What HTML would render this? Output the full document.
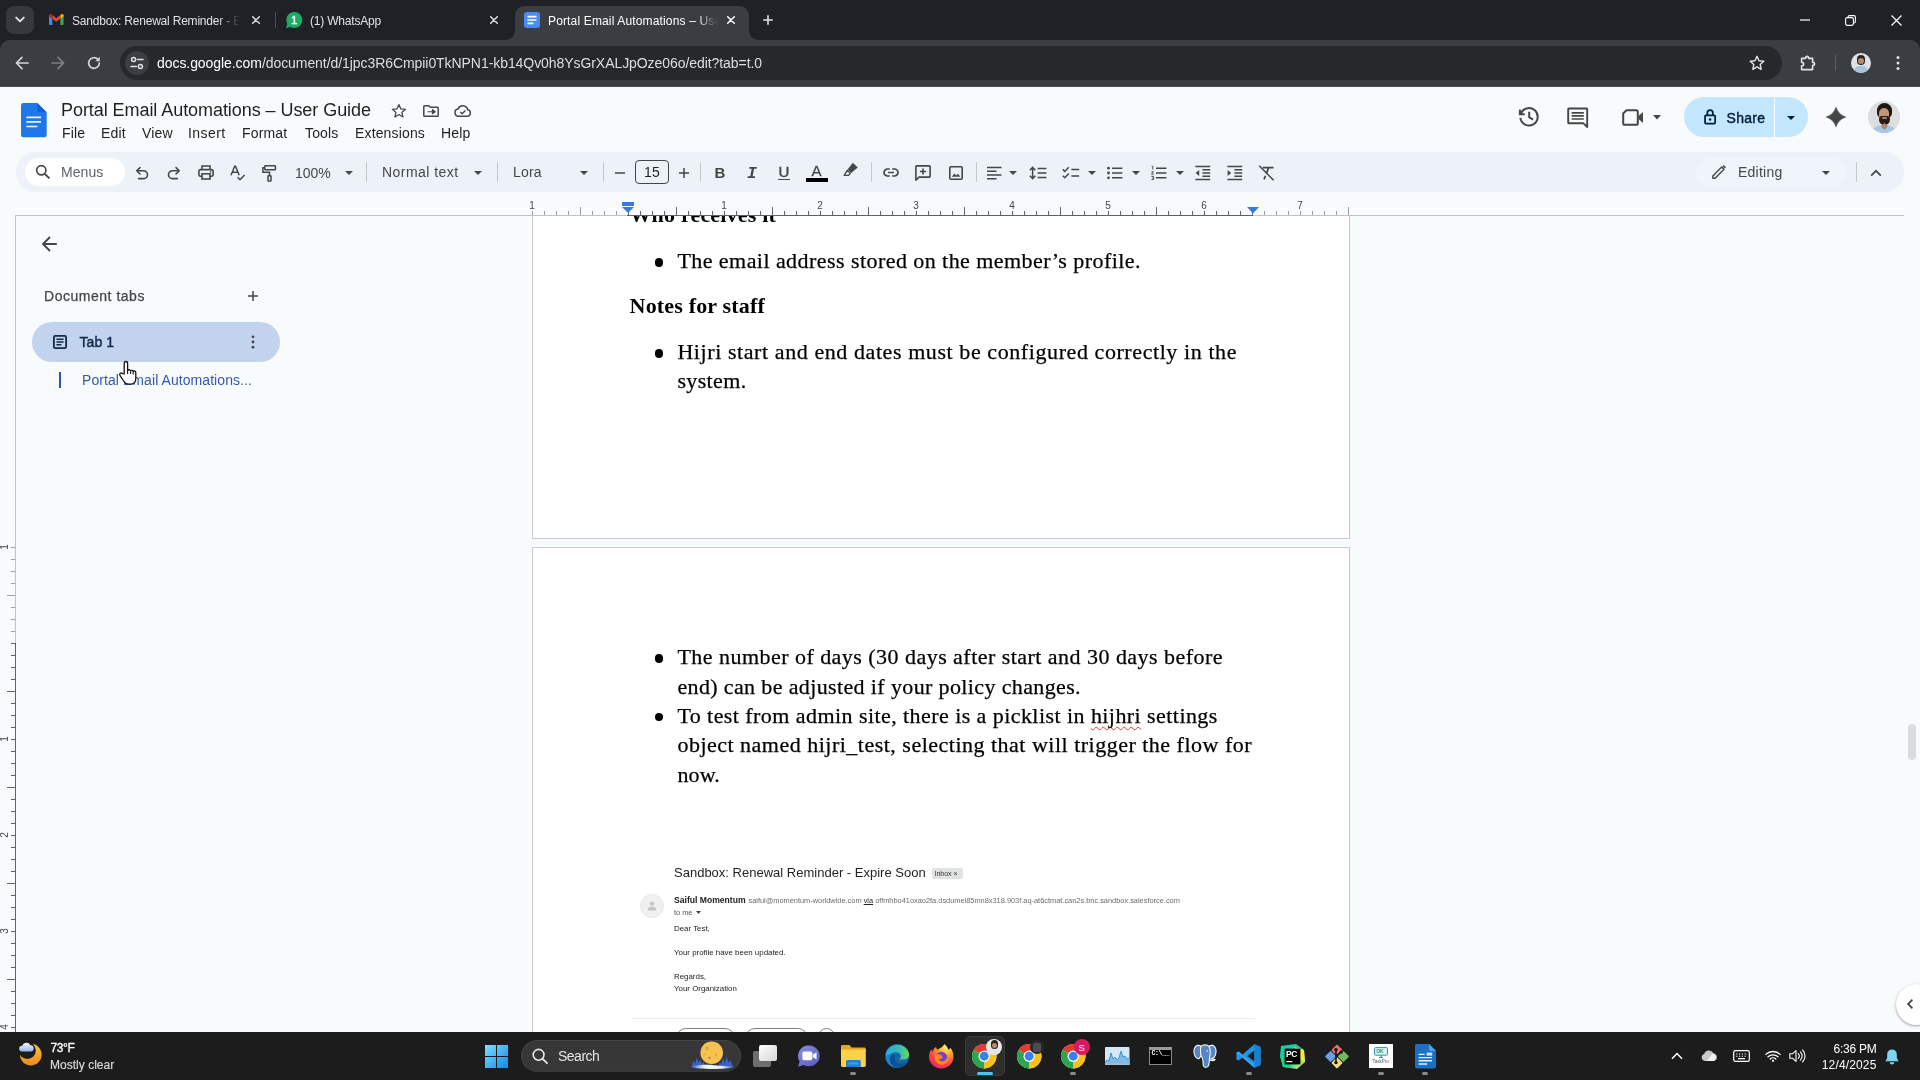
<!DOCTYPE html>
<html lang="en">
<head>
<meta charset="utf-8">
<title>Portal Email Automations – User Guide - Google Docs</title>
<style>
*{box-sizing:border-box;margin:0;padding:0}
html,body{width:1920px;height:1080px;overflow:hidden;background:#f8fbfc}
body{position:relative;font-family:"Liberation Sans",sans-serif;color:#1f1f1f}
.abs{position:absolute}
.t{position:absolute;white-space:nowrap;line-height:1}
svg{position:absolute;overflow:visible}
/* ---------- browser chrome ---------- */
#tabstrip{left:0;top:0;width:1920px;height:54px;background:#1e2125}
#navbar{left:0;top:40px;width:1920px;height:46px;background:#3a3d41;border-radius:10px 10px 0 0}
#navline{left:0;top:86px;width:1920px;height:1px;background:#4b4d51}
#omni{left:120px;top:46px;width:1662px;height:34px;border-radius:17px;background:#26282c}
.tabtxt{font-size:12px;color:#dfe1e5;letter-spacing:-0.2px}
/* ---------- docs ---------- */
.menu{font-size:14px;color:#1f1f1f;letter-spacing:.15px;top:126px}
.tb{font-size:14px;color:#444746}
.sep{position:absolute;width:1px;background:#c7c7c7;top:162px;height:20px}
.serif{font-family:"Liberation Serif",serif;font-size:22px;color:#000;-webkit-text-stroke:.25px #000;position:absolute;white-space:nowrap;line-height:1}
/* ---------- taskbar ---------- */
#taskbar{left:0;top:1032px;width:1920px;height:48px;background:#1c1c1d}
.tk{color:#fff;font-size:12px}
.sq{text-decoration:underline wavy #e03b30 1px;text-underline-offset:3px;text-decoration-skip-ink:none}
</style>
</head>
<body>
<div id="root" style="position:absolute;left:0;top:0;width:1920px;height:1080px;will-change:transform">

<!-- ================= BROWSER CHROME ================= -->
<div id="tabstrip" class="abs"></div>
<div id="navbar" class="abs"></div>
<div id="navline" class="abs"></div>

<!-- tab search dropdown -->
<div class="abs" style="left:6px;top:6px;width:28px;height:28px;border-radius:8px;background:#35383c"></div>
<svg style="left:14px;top:15px" width="12" height="10" viewBox="0 0 12 10"><path d="M2.2 2.6 6 6.4 9.8 2.6" fill="none" stroke="#e3e3e3" stroke-width="1.9" stroke-linecap="round" stroke-linejoin="round"/></svg>

<!-- tab 1 : gmail -->
<svg style="left:48.600px;top:14px" width="14.600" height="11" viewBox="0 0 16 12">
<path d="M0 1.6V11a1 1 0 0 0 1 1h2.6V5.2z" fill="#4285f4"/>
<path d="M16 1.6V11a1 1 0 0 1-1 1h-2.6V5.2z" fill="#34a853"/>
<path d="M12.4 1.2V5.2L16 2.5V1.6C16 .2 14.5-.4 13.4.4z" fill="#fbbc04"/>
<path d="M3.6 5.2V1.2L8 4.5l4.4-3.3v4L8 8.5z" fill="#ea4335"/>
<path d="M0 1.6v.9l3.6 2.7v-4L2.6.4C1.5-.4 0 .2 0 1.6z" fill="#c5221f"/>
</svg>
<div class="t tabtxt" style="left:72px;top:15px;width:170px;overflow:hidden;-webkit-mask-image:linear-gradient(90deg,#000 146px,transparent 168px);mask-image:linear-gradient(90deg,#000 146px,transparent 168px)">Sandbox: Renewal Reminder - Expire Soon</div>
<svg style="left:251px;top:15px" width="10" height="10" viewBox="0 0 10 10"><path d="M1.700 1.700 8.300 8.300M8.300 1.700 1.700 8.300" stroke="#dfe1e5" stroke-width="1.5" stroke-linecap="round"/></svg>
<div class="abs" style="left:275px;top:12px;width:1px;height:16px;background:#4a4d51"></div>

<!-- tab 2 : whatsapp -->
<svg style="left:285px;top:11px" width="18" height="18" viewBox="0 0 18 18"><circle cx="9.300" cy="9" r="8" fill="#1dab61"/><path d="M1 17.200 2.600 12 6.600 15.600Z" fill="#1dab61"/></svg>
<div class="t" style="left:291px;top:14.500px;font-size:11.500px;color:#fff;-webkit-text-stroke:.4px #fff">1</div>
<div class="t tabtxt" style="left:310px;top:15px">(1) WhatsApp</div>
<svg style="left:489px;top:15px" width="10" height="10" viewBox="0 0 10 10"><path d="M1.700 1.700 8.300 8.300M8.300 1.700 1.700 8.300" stroke="#dfe1e5" stroke-width="1.5" stroke-linecap="round"/></svg>

<!-- tab 3 : active docs tab -->
<svg style="left:505px;top:6px" width="254" height="34" viewBox="0 0 254 34"><path d="M0 34C6 34 10 30 10 24V10C10 4 14 0 20 0H234C240 0 244 4 244 10V24C244 30 248 34 254 34Z" fill="#3a3d41"/></svg>
<svg style="left:524px;top:12px" width="16" height="16" viewBox="0 0 16 16"><rect x="0" y="0" width="16" height="16" rx="3" fill="#4a8af4"/><path d="M3.5 4.6h9M3.5 8h9M3.5 11.4h6" stroke="#fff" stroke-width="1.6"/></svg>
<div class="t tabtxt" style="left:548px;top:15px;width:172px;overflow:hidden;color:#fff;letter-spacing:.15px;-webkit-mask-image:linear-gradient(90deg,#000 148px,transparent 170px);mask-image:linear-gradient(90deg,#000 148px,transparent 170px)">Portal Email Automations – User Guide</div>
<svg style="left:726px;top:15px" width="10" height="10" viewBox="0 0 10 10"><path d="M1.700 1.700 8.300 8.300M8.300 1.700 1.700 8.300" stroke="#fff" stroke-width="1.5" stroke-linecap="round"/></svg>
<svg style="left:762px;top:14px" width="12" height="12" viewBox="0 0 12 12"><path d="M6 1.250V10.750M1.250 6H10.750" stroke="#e3e3e3" stroke-width="1.600"/></svg>

<!-- window controls -->
<svg style="left:1800px;top:19px" width="10" height="2" viewBox="0 0 10 2"><path d="M0 1h10" stroke="#fff" stroke-width="1.2"/></svg>
<svg style="left:1845px;top:15px" width="11" height="11" viewBox="0 0 11 11"><rect x=".6" y="2.6" width="7.8" height="7.8" rx="1.6" fill="none" stroke="#fff" stroke-width="1.1"/><path d="M3 2.4V2A1.5 1.5 0 0 1 4.5.6H9A1.5 1.5 0 0 1 10.4 2v4.5A1.5 1.5 0 0 1 9 8h-.4" fill="none" stroke="#fff" stroke-width="1.1"/></svg>
<svg style="left:1891px;top:15px" width="11" height="11" viewBox="0 0 11 11"><path d="M.5.5l10 10M10.500 .5l-10 10" stroke="#fff" stroke-width="1.2"/></svg>

<!-- nav buttons -->
<svg style="left:15px;top:56px" width="14" height="14" viewBox="0 0 14 14"><path d="M13 7H1.6M7 1.4 1.4 7 7 12.600" fill="none" stroke="#d5d7da" stroke-width="1.7" stroke-linecap="round" stroke-linejoin="round"/></svg>
<svg style="left:51px;top:56px" width="14" height="14" viewBox="0 0 14 14"><path d="M1 7h11.4M7 1.400 12.600 7 7 12.600" fill="none" stroke="#7d8084" stroke-width="1.700" stroke-linecap="round" stroke-linejoin="round"/></svg>
<svg style="left:87px;top:56px" width="14" height="14" viewBox="0 0 14 14"><path d="M12.300 7A5.300 5.300 0 1 1 10.700 3.200" fill="none" stroke="#d5d7da" stroke-width="1.700" stroke-linecap="round"/><path d="M12.800 .8v4.400H8.400z" fill="#d5d7da"/></svg>

<!-- omnibox -->
<div id="omni" class="abs"></div>
<div class="abs" style="left:125px;top:51px;width:24px;height:24px;border-radius:12px;background:#3b3e42"></div>
<svg style="left:130px;top:56px" width="14" height="14" viewBox="0 0 14 14"><circle cx="3.600" cy="3.600" r="2" fill="none" stroke="#e3e3e3" stroke-width="1.500"/><path d="M7.600 3.600H13" stroke="#e3e3e3" stroke-width="1.500" stroke-linecap="round"/><circle cx="10.400" cy="10.400" r="2" fill="none" stroke="#e3e3e3" stroke-width="1.500"/><path d="M1 10.400H6.400" stroke="#e3e3e3" stroke-width="1.500" stroke-linecap="round"/></svg>
<div class="t" style="left:157px;top:56px;font-size:14px;color:#fff;letter-spacing:-.065px">docs.google.com<span style="color:#dcdee1">/document/d/1jpc3R6Cmpii0TkNPN1-kb14Qv0h8YsGrXALJpOze06o/edit?tab=t.0</span></div>
<svg style="left:1749px;top:55px" width="16" height="16" viewBox="0 0 16 16"><path d="M8 1.300 10 5.800 14.800 6.300 11.200 9.500 12.200 14.300 8 11.800 3.800 14.300 4.800 9.500 1.200 6.300 6 5.800Z" fill="none" stroke="#e3e3e3" stroke-width="1.400" stroke-linejoin="round"/></svg>
<svg style="left:1799px;top:54px" width="18" height="18" viewBox="0 0 18 18"><path d="M2.600 4.400H6.600V3.900A1.500 1.500 0 0 1 9.600 3.900V4.400H13.600V8.400H14.100A1.500 1.500 0 0 1 14.100 11.400H13.600V15.600H2.600V11.800H3A1.700 1.700 0 0 0 3 8.400H2.600Z" fill="none" stroke="#e3e3e3" stroke-width="1.600" stroke-linejoin="round"/></svg>
<div class="abs" style="left:1835px;top:55px;width:1px;height:16px;background:#5a5d61"></div>
<div class="abs" style="left:1851px;top:53px;width:20px;height:20px;border-radius:10px;background:#dfe3e6;overflow:hidden">
  <div class="abs" style="left:6px;top:2px;width:8px;height:10px;border-radius:4px;background:#2b2321"></div>
  <div class="abs" style="left:7px;top:5px;width:6px;height:6px;border-radius:3px;background:#b98a6c"></div>
  <div class="abs" style="left:3px;top:13px;width:14px;height:10px;border-radius:5px;background:#a9c4dc"></div>
</div>
<svg style="left:1896px;top:55px" width="4" height="16" viewBox="0 0 4 16"><circle cx="2" cy="2.500" r="1.500" fill="#e3e3e3"/><circle cx="2" cy="8" r="1.500" fill="#e3e3e3"/><circle cx="2" cy="13.500" r="1.500" fill="#e3e3e3"/></svg>

<!-- ================= DOCS HEADER ================= -->

<!-- docs logo -->
<svg style="left:21.200px;top:103px" width="25.700" height="34.300" viewBox="0 0 25.700 34.300"><path d="M2.400 0H16.400L25.700 9.300V31.900A2.400 2.400 0 0 1 23.300 34.300H2.400A2.400 2.400 0 0 1 0 31.900V2.400A2.400 2.400 0 0 1 2.400 0Z" fill="#1f78ea"/><path d="M16.400 0 25.700 9.300H18.800A2.400 2.400 0 0 1 16.400 6.900Z" fill="#0b55cf" opacity=".7"/><path d="M5.400 14.300H20M5.400 18.900H20M5.400 23.500H16.300" stroke="#eef4ff" stroke-width="1.700"/></svg>
<div class="t" style="left:61px;top:101px;font-size:18px;color:#1f1f1f;letter-spacing:-.06px">Portal Email Automations – User Guide</div>
<!-- star -->
<svg style="left:391px;top:103px" width="15.800" height="15.800" viewBox="0 0 17 17"><path d="M8.500 1.700 10.500 6.300 15.500 6.800 11.700 10.100 12.800 15 8.500 12.400 4.200 15 5.300 10.100 1.500 6.800 6.500 6.300Z" fill="none" stroke="#444746" stroke-width="1.400" stroke-linejoin="round"/></svg>
<!-- move to folder -->
<svg style="left:423px;top:104.800px" width="16" height="12" viewBox="0 0 16 12"><path d="M1.600 .8H5.800L7.300 2.300H14.400A.8 .8 0 0 1 15.200 3.100V10.400A.8 .8 0 0 1 14.400 11.200H1.600A.8 .8 0 0 1 .8 10.400V1.600A.8 .8 0 0 1 1.600 .8Z" fill="none" stroke="#444746" stroke-width="1.500" stroke-linejoin="round"/><path d="M4.600 6.700H9.400V4.500L12.200 6.700 9.400 8.900V6.700" fill="#444746" stroke="#444746" stroke-width="1.100" stroke-linejoin="round"/></svg>
<!-- cloud done -->
<svg style="left:454px;top:104.800px" width="18" height="12" viewBox="0 0 18 12"><path d="M4.600 11.200A3.600 3.600 0 0 1 4 4.050 5.100 5.100 0 0 1 13.700 4.700 3.300 3.300 0 0 1 13.600 11.200Z" fill="none" stroke="#444746" stroke-width="1.500" stroke-linejoin="round"/><path d="M6.400 7.100 8.100 8.800 11.500 5.400" fill="none" stroke="#444746" stroke-width="1.400"/></svg>
<!-- menus -->
<div class="t menu" style="left:62px">File</div>
<div class="t menu" style="left:101px">Edit</div>
<div class="t menu" style="left:142px">View</div>
<div class="t menu" style="left:188px;letter-spacing:.45px">Insert</div>
<div class="t menu" style="left:242px">Format</div>
<div class="t menu" style="left:305px">Tools</div>
<div class="t menu" style="left:355px">Extensions</div>
<div class="t menu" style="left:441px">Help</div>

<!-- right header icons -->
<!-- history -->
<svg style="left:1517px;top:105px" width="24" height="24" viewBox="0 0 24 24"><path d="M3.700 9.200A8.700 8.700 0 1 1 3.360 12.900" fill="none" stroke="#444746" stroke-width="2"/><path d="M2.900 4.400V9.300H7.700" fill="none" stroke="#444746" stroke-width="2"/><path d="M12.200 6.800V12.200L16 14.600" fill="none" stroke="#444746" stroke-width="2"/></svg>
<!-- comments -->
<svg style="left:1567px;top:107px" width="22" height="22" viewBox="0 0 22 22"><path d="M2 1.500H19.400A.8 .8 0 0 1 20.200 2.300V20L16.500 16.300H2A.8 .8 0 0 1 1.200 15.500V2.300A.8 .8 0 0 1 2 1.500Z" fill="none" stroke="#444746" stroke-width="1.900" stroke-linejoin="round"/><path d="M4.600 5.800H16.800M4.600 8.900H16.800M4.600 12H16.800" stroke="#444746" stroke-width="1.700"/></svg>
<!-- video -->
<svg style="left:1622px;top:109px" width="22" height="17" viewBox="0 0 22 17"><path d="M4.500 1.200H14.200A1.600 1.600 0 0 1 15.800 2.800V14.200A1.600 1.600 0 0 1 14.200 15.800H2.800A1.600 1.600 0 0 1 1.200 14.200V4.500Z" fill="none" stroke="#444746" stroke-width="2" stroke-linejoin="round"/><path d="M16.500 7 21 3V14L16.500 10Z" fill="#444746"/></svg>
<svg style="left:1653px;top:115px" width="8" height="4.500" viewBox="0 0 8 4.500"><path d="M0 0H8L4 4.500Z" fill="#444746"/></svg>
<!-- share -->
<div class="abs" style="left:1684px;top:97px;width:124px;height:40px;border-radius:20px;background:#c2e7ff"></div>
<div class="abs" style="left:1774px;top:97px;width:1px;height:40px;background:#f8fbfc"></div>
<svg style="left:1704px;top:108.800px" width="12.200" height="15.700" viewBox="0 0 14 18"><rect x="1.200" y="7.200" width="11.600" height="9.600" rx="1.200" fill="none" stroke="#001d35" stroke-width="2"/><path d="M3.800 7V4.600A3.200 3.200 0 0 1 10.200 4.600V7" fill="none" stroke="#001d35" stroke-width="2"/><circle cx="7" cy="12" r="1.400" fill="#001d35"/></svg>
<div class="t" style="left:1726.500px;top:111px;font-size:14px;color:#001d35;-webkit-text-stroke:.4px #001d35;letter-spacing:.3px">Share</div>
<svg style="left:1787px;top:116px" width="8" height="4" viewBox="0 0 8 4"><path d="M0 0H8L4 4Z" fill="#001d35"/></svg>
<!-- gemini spark -->
<svg style="left:1826px;top:107px" width="20" height="20" viewBox="0 0 20 20"><path d="M10 .4C11.400 5 15 8.600 19.600 10 15 11.400 11.400 15 10 19.600 8.600 15 5 11.400 .4 10 5 8.600 8.600 5 10 .4Z" fill="#444746" stroke="#444746" stroke-width=".8" stroke-linejoin="round"/></svg>
<!-- avatar -->
<div class="abs" style="left:1868px;top:101.200px;width:32px;height:32px;border-radius:16px;background:#dedede;overflow:hidden">
  <div class="abs" style="left:8.500px;top:1.500px;width:15px;height:15px;border-radius:7.500px 7.500px 5px 5px;background:#1d1614"></div>
  <div class="abs" style="left:11px;top:7px;width:10px;height:13px;border-radius:5px;background:#bf9678"></div>
  <div class="abs" style="left:10.500px;top:15px;width:11px;height:9px;border-radius:3px 3px 5.500px 5.500px;background:#2a1d18"></div>
  <div class="abs" style="left:13.500px;top:16px;width:5px;height:2px;border-radius:1px;background:#a87c62"></div>
  <div class="abs" style="left:2px;top:24px;width:28px;height:16px;border-radius:12px 12px 0 0;background:#a5c9ea"></div>
  <div class="abs" style="left:13.500px;top:22.500px;width:5px;height:5px;transform:rotate(45deg);background:#b48a6e"></div>
</div>

<!-- ================= DOCS TOOLBAR ================= -->

<div class="abs" style="left:16px;top:152px;width:1888px;height:40px;border-radius:20px;background:#edf2f8"></div>
<div class="abs" style="left:25px;top:158px;width:100px;height:28px;border-radius:14px;background:#fff"></div>
<svg style="left:35px;top:164px" width="16" height="16" viewBox="0 0 16 16"><circle cx="6.300" cy="6.300" r="4.600" fill="none" stroke="#444746" stroke-width="1.700"/><path d="M9.800 9.800 14.400 14.400" stroke="#444746" stroke-width="1.900"/></svg>
<div class="t tb" style="left:61px;top:165px;color:#5f6368;letter-spacing:.05px">Menus</div>
<!-- undo -->
<svg style="left:135px;top:166px" width="14" height="14" viewBox="0 0 14 14"><path d="M5 1.600 1.800 4.800 5 8" fill="none" stroke="#444746" stroke-width="1.600" stroke-linejoin="round" stroke-linecap="round"/><path d="M2.200 4.800H8.600A3.900 3.900 0 0 1 8.600 12.600H3.600" fill="none" stroke="#444746" stroke-width="1.600" stroke-linecap="round"/></svg>
<!-- redo -->
<svg style="left:167px;top:166px" width="14" height="14" viewBox="0 0 14 14"><path d="M9 1.600 12.200 4.800 9 8" fill="none" stroke="#444746" stroke-width="1.600" stroke-linejoin="round" stroke-linecap="round"/><path d="M11.800 4.800H5.400A3.900 3.900 0 0 0 5.400 12.600H10.400" fill="none" stroke="#444746" stroke-width="1.600" stroke-linecap="round"/></svg>
<!-- print -->
<svg style="left:198px;top:165px" width="16" height="15" viewBox="0 0 16 15"><path d="M4 4.600V1H12V4.600" fill="none" stroke="#444746" stroke-width="1.600"/><path d="M4 11.200H2.400A1.500 1.500 0 0 1 .9 9.700V6.300A1.700 1.700 0 0 1 2.600 4.600H13.400A1.700 1.700 0 0 1 15.100 6.300V9.700A1.500 1.500 0 0 1 13.600 11.200H12" fill="none" stroke="#444746" stroke-width="1.600"/><rect x="4" y="8.800" width="8" height="5.200" fill="none" stroke="#444746" stroke-width="1.600"/><circle cx="12.600" cy="6.900" r=".8" fill="#444746"/></svg>
<!-- spellcheck -->
<svg style="left:230px;top:165px" width="16" height="16" viewBox="0 0 16 16"><path d="M1 10.300 4.700 1.200H5.500L9.200 10.300M2.400 7.200H7.800" fill="none" stroke="#444746" stroke-width="1.500"/><path d="M7.600 12.300 10 14.700 14.600 10" fill="none" stroke="#444746" stroke-width="1.500"/></svg>
<!-- paint format -->
<svg style="left:262px;top:165px" width="15" height="17" viewBox="0 0 15 17"><rect x="2.800" y=".8" width="10.600" height="4" rx=".6" fill="none" stroke="#444746" stroke-width="1.500"/><path d="M2.800 2.800H.9V7.300H7.500V10.400" fill="none" stroke="#444746" stroke-width="1.500"/><rect x="6" y="10.800" width="3" height="5.200" rx=".5" fill="none" stroke="#444746" stroke-width="1.500"/></svg>
<div class="t tb" style="left:295px;top:166px">100%</div>
<svg style="left:345px;top:171px" width="8" height="4" viewBox="0 0 8 4"><path d="M0 0H8L4 4Z" fill="#444746"/></svg>
<div class="sep" style="left:366px"></div>
<div class="t tb" style="left:382px;top:165px;letter-spacing:.46px">Normal text</div>
<svg style="left:474px;top:171px" width="8" height="4" viewBox="0 0 8 4"><path d="M0 0H8L4 4Z" fill="#444746"/></svg>
<div class="sep" style="left:497px"></div>
<div class="t tb" style="left:513px;top:165px;letter-spacing:.2px">Lora</div>
<svg style="left:580px;top:171px" width="8" height="4" viewBox="0 0 8 4"><path d="M0 0H8L4 4Z" fill="#444746"/></svg>
<div class="sep" style="left:603px"></div>
<svg style="left:615px;top:171.500px" width="10" height="2" viewBox="0 0 10 2"><path d="M0 1H10" stroke="#444746" stroke-width="1.500"/></svg>
<div class="abs" style="left:635px;top:160px;width:34px;height:24px;border-radius:4px;border:1px solid #444746"></div>
<div class="t tb" style="left:644px;top:165px;color:#1f1f1f;letter-spacing:.3px">15</div>
<svg style="left:679px;top:167.500px" width="10" height="10" viewBox="0 0 10 10"><path d="M0 5H10M5 0V10" stroke="#444746" stroke-width="1.500"/></svg>
<div class="sep" style="left:700px"></div>
<!-- B I U A -->
<div class="t" style="left:714.500px;top:165px;font-size:15px;font-weight:bold;color:#444746">B</div>
<div class="t" style="left:747px;top:165.500px;font-size:16.500px;font-style:italic;font-weight:bold;color:#444746;font-family:'Liberation Mono',monospace">I</div>
<div class="t" style="left:778.500px;top:164px;font-size:15px;color:#444746;-webkit-text-stroke:.4px #444746">U</div>
<div class="abs" style="left:778px;top:178.500px;width:12px;height:1.500px;background:#444746"></div>
<div class="t" style="left:811.500px;top:163px;font-size:15px;color:#444746;-webkit-text-stroke:.3px #444746">A</div>
<div class="abs" style="left:806px;top:178px;width:22px;height:4px;background:#000"></div>
<!-- highlighter -->
<svg style="left:843px;top:162px" width="16" height="15" viewBox="0 0 16 15"><path d="M9.800 .8 14.800 5.400 8.200 11 4.600 7.600Z" fill="#444746"/><path d="M4.200 8.300 7.400 11.400 5.200 13.400H1.200Z" fill="none" stroke="#444746" stroke-width="1.300" stroke-linejoin="round"/></svg>
<div class="sep" style="left:871px"></div>
<!-- link -->
<svg style="left:883px;top:168px" width="16" height="9" viewBox="0 0 16 9"><path d="M6.800 1H4.500A3.500 3.500 0 0 0 4.500 8H6.800M9.200 1H11.500A3.500 3.500 0 0 1 11.500 8H9.200M5 4.500H11" fill="none" stroke="#444746" stroke-width="1.700"/></svg>
<!-- add comment -->
<svg style="left:915px;top:165px" width="16" height="16" viewBox="0 0 16 16"><path d="M1.600 .9H14.400A.7 .7 0 0 1 15.100 1.600V11.400A.7 .7 0 0 1 14.400 12.100H4L.9 15.200V1.600A.7 .7 0 0 1 1.600 .9Z" fill="none" stroke="#444746" stroke-width="1.600" stroke-linejoin="round"/><path d="M8 3.400V9.600M4.900 6.500H11.100" stroke="#444746" stroke-width="1.600"/></svg>
<!-- image -->
<svg style="left:949px;top:166px" width="14" height="14" viewBox="0 0 14 14"><rect x=".8" y=".8" width="12.400" height="12.400" rx="1" fill="none" stroke="#444746" stroke-width="1.600"/><path d="M2.800 10.800 5.400 7.400 7.200 9.600 9 7.800 11.300 10.800Z" fill="#444746"/></svg>
<div class="sep" style="left:976px"></div>
<!-- align -->
<svg style="left:987px;top:166px" width="15" height="14" viewBox="0 0 15 14"><path d="M0 1.400H14.500M0 5.200H9.500M0 9H14.500M0 12.800H9.500" stroke="#444746" stroke-width="1.500"/></svg>
<svg style="left:1008.5px;top:171px" width="8" height="4" viewBox="0 0 8 4"><path d="M0 0H8L4 4Z" fill="#444746"/></svg>
<!-- line spacing -->
<svg style="left:1029px;top:166px" width="18" height="14" viewBox="0 0 18 14"><path d="M3.600 1.600V12.400M.8 4.200 3.600 1.400 6.400 4.200M.8 9.800 3.600 12.600 6.400 9.800" fill="none" stroke="#444746" stroke-width="1.500"/><path d="M8.600 2.400H17.400M8.600 7H17.400M8.600 11.600H17.400" stroke="#444746" stroke-width="1.500"/></svg>
<!-- checklist -->
<svg style="left:1062px;top:166px" width="18" height="14" viewBox="0 0 18 14"><path d="M.8 3.400 2.800 5.400 6.800 1.200M.8 9.800 2.800 11.800 6.800 7.600" fill="none" stroke="#444746" stroke-width="1.500"/><path d="M9.400 3.400H17.200M9.400 10H17.200" stroke="#444746" stroke-width="1.500"/></svg>
<svg style="left:1088px;top:171px" width="8" height="4" viewBox="0 0 8 4"><path d="M0 0H8L4 4Z" fill="#444746"/></svg>
<!-- bullets -->
<svg style="left:1107px;top:166px" width="16" height="14" viewBox="0 0 16 14"><circle cx="1.500" cy="2.200" r="1.400" fill="#444746"/><circle cx="1.500" cy="7" r="1.400" fill="#444746"/><circle cx="1.500" cy="11.800" r="1.400" fill="#444746"/><path d="M5 2.200H15.400M5 7H15.400M5 11.800H15.400" stroke="#444746" stroke-width="1.500"/></svg>
<svg style="left:1132px;top:171px" width="8" height="4" viewBox="0 0 8 4"><path d="M0 0H8L4 4Z" fill="#444746"/></svg>
<!-- numbered -->
<svg style="left:1151px;top:165px" width="16" height="16" viewBox="0 0 16 16"><path d="M5 3.200H15.400M5 8H15.400M5 12.800H15.400" stroke="#444746" stroke-width="1.500"/><path d="M.6 1.200H1.800V4.600M.4 6.800H2.600L.4 9.200H2.800M.4 11.400H2.600V14.600H.4M1.200 13H2.600" fill="none" stroke="#444746" stroke-width=".9"/></svg>
<svg style="left:1176px;top:171px" width="8" height="4" viewBox="0 0 8 4"><path d="M0 0H8L4 4Z" fill="#444746"/></svg>
<!-- outdent -->
<svg style="left:1195px;top:165px" width="16" height="16" viewBox="0 0 16 16"><path d="M.4 1.400H15.200M.4 14.600H15.200" stroke="#444746" stroke-width="1.500"/><path d="M7.400 4.700H15.200M7.400 8H15.200M7.400 11.300H15.200" stroke="#444746" stroke-width="1.400"/><path d="M4.200 5 .6 8 4.200 11Z" fill="#444746"/></svg>
<!-- indent -->
<svg style="left:1227px;top:165px" width="16" height="16" viewBox="0 0 16 16"><path d="M.4 1.400H15.200M.4 14.600H15.200" stroke="#444746" stroke-width="1.500"/><path d="M7.400 4.700H15.200M7.400 8H15.200M7.400 11.300H15.200" stroke="#444746" stroke-width="1.400"/><path d="M.6 5 4.200 8 .6 11Z" fill="#444746"/></svg>
<!-- clear formatting -->
<svg style="left:1258px;top:165px" width="17" height="16" viewBox="0 0 17 16"><path d="M4.600 2.600H15.600M10.600 2.600 8.400 8.600M7.400 10.800 6 14.400" fill="none" stroke="#444746" stroke-width="1.700"/><path d="M1.200 .8 15.600 15.200" stroke="#444746" stroke-width="1.500"/></svg>

<!-- editing mode -->
<div class="abs" style="left:1696px;top:158px;width:151px;height:29px;border-radius:14.500px;background:#f0f4fb"></div>
<svg style="left:1711px;top:164px" width="16" height="16" viewBox="0 0 16 16"><path d="M1.800 14.200V11.900L10.700 3 13 5.300 4.100 14.200Z" fill="none" stroke="#444746" stroke-width="1.400" stroke-linejoin="round"/><path d="M11.500 2.200 12.700 1 15 3.300 13.800 4.500Z" fill="#444746"/></svg>
<div class="t tb" style="left:1738px;top:165px;letter-spacing:.25px">Editing</div>
<svg style="left:1822px;top:171px" width="8" height="4" viewBox="0 0 8 4"><path d="M0 0H8L4 4Z" fill="#444746"/></svg>
<div class="sep" style="left:1856px"></div>
<svg style="left:1870px;top:169px" width="12" height="8" viewBox="0 0 12 8"><path d="M1.200 6.600 6 1.800 10.800 6.600" fill="none" stroke="#444746" stroke-width="1.700"/></svg>


<!-- ================= SIDEBAR ================= -->

<!-- back arrow -->
<svg style="left:41px;top:236px" width="16" height="16" viewBox="0 0 16 16"><path d="M15.800 8H2M9 1 2 8 9 15" fill="none" stroke="#444746" stroke-width="1.900"/></svg>
<div class="t" style="left:44px;top:289px;font-size:14px;color:#444746;letter-spacing:.52px;-webkit-text-stroke:.25px #444746">Document tabs</div>
<svg style="left:248px;top:291px" width="10" height="10" viewBox="0 0 10 10"><path d="M5 0V10M0 5H10" stroke="#444746" stroke-width="1.500"/></svg>
<div class="abs" style="left:32px;top:322px;width:248px;height:40px;border-radius:20px;background:#c2d3ed"></div>
<svg style="left:53px;top:335px" width="14" height="14" viewBox="0 0 14 14"><rect x=".9" y=".9" width="12.200" height="12.200" rx="1.400" fill="none" stroke="#14284a" stroke-width="1.800"/><path d="M3.400 4.300H10.600M3.400 7H10.600M3.400 9.700H8.400" stroke="#14284a" stroke-width="1.600"/></svg>
<div class="t" style="left:79.500px;top:335px;font-size:14px;color:#14284a;-webkit-text-stroke:.45px #14284a;letter-spacing:.1px">Tab 1</div>
<svg style="left:251px;top:335px" width="4" height="14" viewBox="0 0 4 14"><circle cx="2" cy="1.800" r="1.400" fill="#444746"/><circle cx="2" cy="7" r="1.400" fill="#444746"/><circle cx="2" cy="12.200" r="1.400" fill="#444746"/></svg>
<div class="abs" style="left:59px;top:372px;width:2px;height:16px;background:#2d53b3"></div>
<div class="t" style="left:82px;top:373px;font-size:14px;color:#3558b0;letter-spacing:.07px">Portal Email Automations...</div>
<!-- hand cursor -->
<svg style="left:117px;top:360px" width="22" height="26" viewBox="0 0 22 26"><path d="M7.200 13.800V3.200A1.700 1.700 0 0 1 10.600 3.200V10.600L11 10.200A1.600 1.600 0 0 1 13.600 10.800 1.600 1.600 0 0 1 16.200 11.400 1.600 1.600 0 0 1 18.800 12.600V18.600C18.800 22 16.800 24.200 13.400 24.200H11.800C9.400 24.200 8 23.200 6.600 21L3 15.400A1.500 1.500 0 0 1 5.400 13.600Z" fill="#fff" stroke="#111" stroke-width="1.300" stroke-linejoin="round"/><path d="M10.600 10.600V14M13.600 11.400V14M16.200 12V14.400" stroke="#111" stroke-width="1.100"/></svg>


<!-- ================= DOCUMENT ================= -->

<!-- pages -->
<div class="abs" style="left:532px;top:200px;width:818px;height:339px;background:#fff;border:1px solid #c9cbce;border-top:none"></div>
<div class="abs" style="left:532px;top:547px;width:818px;height:500px;background:#fff;border:1px solid #c9cbce"></div>
<!-- page 1 & 2 text -->
<div class="serif" style="left:629.4px;top:204px;letter-spacing:0.188px;font-weight:bold;-webkit-text-stroke:0">Who receives it</div>
<div class="serif" style="left:677.4px;top:250px;letter-spacing:0.443px">The email address stored on the member’s profile.</div>
<div class="serif" style="left:629.6px;top:295px;letter-spacing:0.175px;font-weight:bold;-webkit-text-stroke:0">Notes for staff</div>
<div class="serif" style="left:677.4px;top:341px;letter-spacing:0.581px">Hijri start and end dates must be configured correctly in the</div>
<div class="serif" style="left:677.4px;top:370px;letter-spacing:0.368px">system.</div>
<div class="serif" style="left:677.4px;top:646px;letter-spacing:0.465px">The number of days (30 days after start and 30 days before</div>
<div class="serif" style="left:677.4px;top:676px;letter-spacing:0.370px">end) can be adjusted if your policy changes.</div>
<div class="serif" style="left:677.4px;top:705px;letter-spacing:0.436px">To test from admin site, there is a picklist in <span class="sq">hijhri</span> settings</div>
<div class="serif" style="left:677.4px;top:734px;letter-spacing:0.494px">object named hijri_test, selecting that will trigger the flow for</div>
<div class="serif" style="left:677.4px;top:764px;letter-spacing:0.158px">now.</div>
<div class="abs" style="left:654.600px;top:257.75px;width:8.900px;height:8.900px;border-radius:50%;background:#000"></div><div class="abs" style="left:654.600px;top:348.75px;width:8.900px;height:8.900px;border-radius:50%;background:#000"></div><div class="abs" style="left:654.600px;top:653.90px;width:8.900px;height:8.900px;border-radius:50%;background:#000"></div><div class="abs" style="left:654.600px;top:712.55px;width:8.900px;height:8.900px;border-radius:50%;background:#000"></div>

<!-- embedded email screenshot -->
<div class="t" style="left:674px;top:866px;font-size:13px;color:#1f1f1f;letter-spacing:.005px">Sandbox: Renewal Reminder - Expire Soon</div>
<div class="abs" style="left:932px;top:868px;width:30.500px;height:11px;border-radius:2px;background:#e1e3e3"></div>
<div class="t" style="left:934.500px;top:870.400px;font-size:7px;color:#333">Inbox ×</div>
<div class="abs" style="left:640px;top:894px;width:24px;height:24px;border-radius:12px;background:#f0f0f0;border:1px solid #e8e8e8"></div>
<svg style="left:646px;top:900px" width="12" height="12" viewBox="0 0 12 12"><circle cx="6" cy="3.600" r="2.200" fill="#c4c4c4"/><path d="M1.600 10.400C1.600 7.800 3.600 6.800 6 6.800S10.400 7.800 10.400 10.400Z" fill="#c4c4c4"/></svg>
<div class="t" style="left:674px;top:896px;font-size:8.600px;font-weight:bold;color:#222">Saiful Momentum</div>
<div class="t" style="left:748.500px;top:897px;font-size:7.400px;color:#6b6b6b">saiful@momentum-worldwide.com <span style="color:#222;text-decoration:underline">via</span> offmhbo41oxao2fa.dsdumel85mn8x318.903f.aq-at6ctmat.can2s.bnc.sandbox.salesforce.com</div>
<div class="t" style="left:674px;top:908.500px;font-size:7.400px;color:#555">to me</div>
<svg style="left:696px;top:911px" width="5" height="3" viewBox="0 0 5 3"><path d="M0 0H5L2.500 3Z" fill="#444"/></svg>
<div class="t" style="left:674px;top:925px;font-size:7.900px;color:#222">Dear Test,</div>
<div class="t" style="left:674px;top:949px;font-size:7.900px;color:#222">Your profile have been updated.</div>
<div class="t" style="left:674px;top:972.500px;font-size:7.900px;color:#222">Regards,</div>
<div class="t" style="left:674px;top:984.500px;font-size:7.900px;color:#222">Your Organization</div>
<div class="abs" style="left:632px;top:1017.500px;width:623px;height:1px;background:#e9ecec"></div>
<div class="abs" style="left:676px;top:1028px;width:59px;height:20px;border-radius:10px;border:1px solid #808080"></div>
<div class="abs" style="left:744.500px;top:1028px;width:63px;height:20px;border-radius:10px;border:1px solid #808080"></div>
<div class="abs" style="left:817.500px;top:1028px;width:17px;height:17px;border-radius:8.500px;border:1px solid #808080"></div>

<!-- cover for top of doc area (above ruler line) -->
<div class="abs" style="left:0;top:192px;width:1920px;height:23px;background:#f8fbfc"></div>
<div class="abs" style="left:16px;top:152px;width:1888px;height:40px;border-radius:20px;background:none"></div>
<!-- ruler lines -->
<div class="abs" style="left:15px;top:215px;width:1889px;height:1px;background:#bfc3c7"></div>
<div class="abs" style="left:627px;top:215px;width:626px;height:1px;background:#5f6368"></div>
<div class="abs" style="left:531.5px;top:211px;width:1px;height:4px;background:#9aa0a6"></div><div class="abs" style="left:543.5px;top:211px;width:1px;height:4px;background:#9aa0a6"></div><div class="abs" style="left:555.5px;top:211px;width:1px;height:4px;background:#9aa0a6"></div><div class="abs" style="left:567.5px;top:211px;width:1px;height:4px;background:#9aa0a6"></div><div class="abs" style="left:579.5px;top:207px;width:1px;height:8px;background:#9aa0a6"></div><div class="abs" style="left:591.5px;top:211px;width:1px;height:4px;background:#9aa0a6"></div><div class="abs" style="left:603.5px;top:211px;width:1px;height:4px;background:#9aa0a6"></div><div class="abs" style="left:615.5px;top:211px;width:1px;height:4px;background:#9aa0a6"></div><div class="abs" style="left:627.5px;top:211px;width:1px;height:4px;background:#5f6368"></div><div class="abs" style="left:639.5px;top:211px;width:1px;height:4px;background:#5f6368"></div><div class="abs" style="left:651.5px;top:211px;width:1px;height:4px;background:#5f6368"></div><div class="abs" style="left:663.5px;top:211px;width:1px;height:4px;background:#5f6368"></div><div class="abs" style="left:675.5px;top:207px;width:1px;height:8px;background:#5f6368"></div><div class="abs" style="left:687.5px;top:211px;width:1px;height:4px;background:#5f6368"></div><div class="abs" style="left:699.5px;top:211px;width:1px;height:4px;background:#5f6368"></div><div class="abs" style="left:711.5px;top:211px;width:1px;height:4px;background:#5f6368"></div><div class="abs" style="left:723.5px;top:211px;width:1px;height:4px;background:#5f6368"></div><div class="abs" style="left:735.5px;top:211px;width:1px;height:4px;background:#5f6368"></div><div class="abs" style="left:747.5px;top:211px;width:1px;height:4px;background:#5f6368"></div><div class="abs" style="left:759.5px;top:211px;width:1px;height:4px;background:#5f6368"></div><div class="abs" style="left:771.5px;top:207px;width:1px;height:8px;background:#5f6368"></div><div class="abs" style="left:783.5px;top:211px;width:1px;height:4px;background:#5f6368"></div><div class="abs" style="left:795.5px;top:211px;width:1px;height:4px;background:#5f6368"></div><div class="abs" style="left:807.5px;top:211px;width:1px;height:4px;background:#5f6368"></div><div class="abs" style="left:819.5px;top:211px;width:1px;height:4px;background:#5f6368"></div><div class="abs" style="left:831.5px;top:211px;width:1px;height:4px;background:#5f6368"></div><div class="abs" style="left:843.5px;top:211px;width:1px;height:4px;background:#5f6368"></div><div class="abs" style="left:855.5px;top:211px;width:1px;height:4px;background:#5f6368"></div><div class="abs" style="left:867.5px;top:207px;width:1px;height:8px;background:#5f6368"></div><div class="abs" style="left:879.5px;top:211px;width:1px;height:4px;background:#5f6368"></div><div class="abs" style="left:891.5px;top:211px;width:1px;height:4px;background:#5f6368"></div><div class="abs" style="left:903.5px;top:211px;width:1px;height:4px;background:#5f6368"></div><div class="abs" style="left:915.5px;top:211px;width:1px;height:4px;background:#5f6368"></div><div class="abs" style="left:927.5px;top:211px;width:1px;height:4px;background:#5f6368"></div><div class="abs" style="left:939.5px;top:211px;width:1px;height:4px;background:#5f6368"></div><div class="abs" style="left:951.5px;top:211px;width:1px;height:4px;background:#5f6368"></div><div class="abs" style="left:963.5px;top:207px;width:1px;height:8px;background:#5f6368"></div><div class="abs" style="left:975.5px;top:211px;width:1px;height:4px;background:#5f6368"></div><div class="abs" style="left:987.5px;top:211px;width:1px;height:4px;background:#5f6368"></div><div class="abs" style="left:999.5px;top:211px;width:1px;height:4px;background:#5f6368"></div><div class="abs" style="left:1011.5px;top:211px;width:1px;height:4px;background:#5f6368"></div><div class="abs" style="left:1023.5px;top:211px;width:1px;height:4px;background:#5f6368"></div><div class="abs" style="left:1035.5px;top:211px;width:1px;height:4px;background:#5f6368"></div><div class="abs" style="left:1047.5px;top:211px;width:1px;height:4px;background:#5f6368"></div><div class="abs" style="left:1059.5px;top:207px;width:1px;height:8px;background:#5f6368"></div><div class="abs" style="left:1071.5px;top:211px;width:1px;height:4px;background:#5f6368"></div><div class="abs" style="left:1083.5px;top:211px;width:1px;height:4px;background:#5f6368"></div><div class="abs" style="left:1095.5px;top:211px;width:1px;height:4px;background:#5f6368"></div><div class="abs" style="left:1107.5px;top:211px;width:1px;height:4px;background:#5f6368"></div><div class="abs" style="left:1119.5px;top:211px;width:1px;height:4px;background:#5f6368"></div><div class="abs" style="left:1131.5px;top:211px;width:1px;height:4px;background:#5f6368"></div><div class="abs" style="left:1143.5px;top:211px;width:1px;height:4px;background:#5f6368"></div><div class="abs" style="left:1155.5px;top:207px;width:1px;height:8px;background:#5f6368"></div><div class="abs" style="left:1167.5px;top:211px;width:1px;height:4px;background:#5f6368"></div><div class="abs" style="left:1179.5px;top:211px;width:1px;height:4px;background:#5f6368"></div><div class="abs" style="left:1191.5px;top:211px;width:1px;height:4px;background:#5f6368"></div><div class="abs" style="left:1203.5px;top:211px;width:1px;height:4px;background:#5f6368"></div><div class="abs" style="left:1215.5px;top:211px;width:1px;height:4px;background:#5f6368"></div><div class="abs" style="left:1227.5px;top:211px;width:1px;height:4px;background:#5f6368"></div><div class="abs" style="left:1239.5px;top:211px;width:1px;height:4px;background:#5f6368"></div><div class="abs" style="left:1251.5px;top:207px;width:1px;height:8px;background:#5f6368"></div><div class="abs" style="left:1263.5px;top:211px;width:1px;height:4px;background:#9aa0a6"></div><div class="abs" style="left:1275.5px;top:211px;width:1px;height:4px;background:#9aa0a6"></div><div class="abs" style="left:1287.5px;top:211px;width:1px;height:4px;background:#9aa0a6"></div><div class="abs" style="left:1299.5px;top:211px;width:1px;height:4px;background:#9aa0a6"></div><div class="abs" style="left:1311.5px;top:211px;width:1px;height:4px;background:#9aa0a6"></div><div class="abs" style="left:1323.5px;top:211px;width:1px;height:4px;background:#9aa0a6"></div><div class="abs" style="left:1335.5px;top:211px;width:1px;height:4px;background:#9aa0a6"></div><div class="abs" style="left:1347.5px;top:207px;width:1px;height:8px;background:#9aa0a6"></div><div class="t" style="left:522px;top:201px;width:20px;text-align:center;font-size:10px;color:#444746">1</div><div class="t" style="left:714px;top:201px;width:20px;text-align:center;font-size:10px;color:#444746">1</div><div class="t" style="left:810px;top:201px;width:20px;text-align:center;font-size:10px;color:#444746">2</div><div class="t" style="left:906px;top:201px;width:20px;text-align:center;font-size:10px;color:#444746">3</div><div class="t" style="left:1002px;top:201px;width:20px;text-align:center;font-size:10px;color:#444746">4</div><div class="t" style="left:1098px;top:201px;width:20px;text-align:center;font-size:10px;color:#444746">5</div><div class="t" style="left:1194px;top:201px;width:20px;text-align:center;font-size:10px;color:#444746">6</div><div class="t" style="left:1290px;top:201px;width:20px;text-align:center;font-size:10px;color:#444746">7</div>
<div class="abs" style="left:622px;top:202px;width:12px;height:3.500px;background:#3b78e7"></div>
<svg style="left:622px;top:207px" width="12" height="6" viewBox="0 0 12 6"><path d="M0 0H12L6 6Z" fill="#3b78e7"/></svg>
<svg style="left:1246.500px;top:207px" width="12" height="6.500" viewBox="0 0 12 6.500"><path d="M0 0H12L6 6.500Z" fill="#3b78e7"/></svg>
<!-- vertical ruler -->
<div class="abs" style="left:15px;top:215px;width:1px;height:817px;background:#bfc3c7"></div>
<div class="abs" style="left:15px;top:643px;width:1px;height:389px;background:#5f6368"></div>
<div class="abs" style="left:11px;top:546.5px;width:4px;height:1px;background:#9aa0a6"></div><div class="abs" style="left:11px;top:558.5px;width:4px;height:1px;background:#9aa0a6"></div><div class="abs" style="left:11px;top:570.5px;width:4px;height:1px;background:#9aa0a6"></div><div class="abs" style="left:11px;top:582.5px;width:4px;height:1px;background:#9aa0a6"></div><div class="abs" style="left:7px;top:594.5px;width:8px;height:1px;background:#9aa0a6"></div><div class="abs" style="left:11px;top:606.5px;width:4px;height:1px;background:#9aa0a6"></div><div class="abs" style="left:11px;top:618.5px;width:4px;height:1px;background:#9aa0a6"></div><div class="abs" style="left:11px;top:630.5px;width:4px;height:1px;background:#9aa0a6"></div><div class="abs" style="left:11px;top:642.5px;width:4px;height:1px;background:#5f6368"></div><div class="abs" style="left:11px;top:654.5px;width:4px;height:1px;background:#5f6368"></div><div class="abs" style="left:11px;top:666.5px;width:4px;height:1px;background:#5f6368"></div><div class="abs" style="left:11px;top:678.5px;width:4px;height:1px;background:#5f6368"></div><div class="abs" style="left:7px;top:690.5px;width:8px;height:1px;background:#5f6368"></div><div class="abs" style="left:11px;top:702.5px;width:4px;height:1px;background:#5f6368"></div><div class="abs" style="left:11px;top:714.5px;width:4px;height:1px;background:#5f6368"></div><div class="abs" style="left:11px;top:726.5px;width:4px;height:1px;background:#5f6368"></div><div class="abs" style="left:11px;top:738.5px;width:4px;height:1px;background:#5f6368"></div><div class="abs" style="left:11px;top:750.5px;width:4px;height:1px;background:#5f6368"></div><div class="abs" style="left:11px;top:762.5px;width:4px;height:1px;background:#5f6368"></div><div class="abs" style="left:11px;top:774.5px;width:4px;height:1px;background:#5f6368"></div><div class="abs" style="left:7px;top:786.5px;width:8px;height:1px;background:#5f6368"></div><div class="abs" style="left:11px;top:798.5px;width:4px;height:1px;background:#5f6368"></div><div class="abs" style="left:11px;top:810.5px;width:4px;height:1px;background:#5f6368"></div><div class="abs" style="left:11px;top:822.5px;width:4px;height:1px;background:#5f6368"></div><div class="abs" style="left:11px;top:834.5px;width:4px;height:1px;background:#5f6368"></div><div class="abs" style="left:11px;top:846.5px;width:4px;height:1px;background:#5f6368"></div><div class="abs" style="left:11px;top:858.5px;width:4px;height:1px;background:#5f6368"></div><div class="abs" style="left:11px;top:870.5px;width:4px;height:1px;background:#5f6368"></div><div class="abs" style="left:7px;top:882.5px;width:8px;height:1px;background:#5f6368"></div><div class="abs" style="left:11px;top:894.5px;width:4px;height:1px;background:#5f6368"></div><div class="abs" style="left:11px;top:906.5px;width:4px;height:1px;background:#5f6368"></div><div class="abs" style="left:11px;top:918.5px;width:4px;height:1px;background:#5f6368"></div><div class="abs" style="left:11px;top:930.5px;width:4px;height:1px;background:#5f6368"></div><div class="abs" style="left:11px;top:942.5px;width:4px;height:1px;background:#5f6368"></div><div class="abs" style="left:11px;top:954.5px;width:4px;height:1px;background:#5f6368"></div><div class="abs" style="left:11px;top:966.5px;width:4px;height:1px;background:#5f6368"></div><div class="abs" style="left:7px;top:978.5px;width:8px;height:1px;background:#5f6368"></div><div class="abs" style="left:11px;top:990.5px;width:4px;height:1px;background:#5f6368"></div><div class="abs" style="left:11px;top:1002.5px;width:4px;height:1px;background:#5f6368"></div><div class="abs" style="left:11px;top:1014.5px;width:4px;height:1px;background:#5f6368"></div><div class="abs" style="left:11px;top:1026.5px;width:4px;height:1px;background:#5f6368"></div><div class="t" style="left:0;top:542px;width:10px;height:10px;line-height:10px;text-align:center;font-size:10px;color:#444746;transform:rotate(-90deg)">1</div><div class="t" style="left:0;top:734px;width:10px;height:10px;line-height:10px;text-align:center;font-size:10px;color:#444746;transform:rotate(-90deg)">1</div><div class="t" style="left:0;top:830px;width:10px;height:10px;line-height:10px;text-align:center;font-size:10px;color:#444746;transform:rotate(-90deg)">2</div><div class="t" style="left:0;top:926px;width:10px;height:10px;line-height:10px;text-align:center;font-size:10px;color:#444746;transform:rotate(-90deg)">3</div><div class="t" style="left:0;top:1022px;width:10px;height:10px;line-height:10px;text-align:center;font-size:10px;color:#444746;transform:rotate(-90deg)">4</div>
<!-- scrollbar thumb -->
<div class="abs" style="left:1908px;top:723.500px;width:8px;height:36.500px;border-radius:4.500px;background:#dadce0"></div>
<!-- side panel toggle -->
<div class="abs" style="left:1896px;top:983.500px;width:41px;height:41px;border-radius:20.500px;background:#fff;box-shadow:0 1px 3px rgba(60,64,67,.35),0 1px 2px rgba(60,64,67,.2)"></div>
<svg style="left:1906px;top:998px" width="8" height="12" viewBox="0 0 8 12"><path d="M6.400 1.700 2.100 6 6.400 10.300" fill="none" stroke="#444746" stroke-width="1.800"/></svg>


<!-- ================= TASKBAR ================= -->
<div id="taskbar" class="abs"></div>

<!-- weather -->
<svg style="left:18px;top:1041px" width="26" height="26" viewBox="0 0 26 26"><defs><linearGradient id="mo" x1="0" y1="0" x2="0" y2="1"><stop offset="0" stop-color="#fdc43a"/><stop offset="1" stop-color="#f28a1e"/></linearGradient><linearGradient id="cl" x1="0" y1="0" x2="0" y2="1"><stop offset="0" stop-color="#f4f8ff"/><stop offset="1" stop-color="#8fb6ea"/></linearGradient></defs>
<circle cx="12.800" cy="13.600" r="10.800" fill="url(#mo)"/><circle cx="9.300" cy="9.600" r="8.500" fill="#1c1c1d"/>
<path d="M4 10.600A2.900 2.900 0 0 1 4.200 4.800 4.500 4.500 0 0 1 12.400 4.200 3.200 3.200 0 0 1 12.600 10.600Z" fill="url(#cl)"/></svg>
<div class="t tk" style="left:50.500px;top:1042px;letter-spacing:-.4px;-webkit-text-stroke:.3px #fff">73°F</div>
<div class="t tk" style="left:50px;top:1059px;color:#d6d6d6;letter-spacing:.02px;-webkit-text-stroke:.2px #d6d6d6">Mostly clear</div>
<!-- start -->
<svg style="left:485px;top:1045px" width="23" height="23" viewBox="0 0 23 23"><defs><linearGradient id="wn" x1="0" y1="0" x2="1" y2="1"><stop offset="0" stop-color="#7fdcff"/><stop offset="1" stop-color="#0f8be8"/></linearGradient></defs><path d="M0 0H11V11H0ZM12 0H23V11H12ZM0 12H11V23H0ZM12 12H23V23H12Z" fill="url(#wn)"/></svg>
<!-- search box -->
<div class="abs" style="left:521px;top:1040px;width:220px;height:32px;border-radius:16px;background:#373737;border:1px solid #444;border-bottom-color:#3a3a3a"></div>
<svg style="left:531px;top:1047px" width="18" height="18" viewBox="0 0 18 18"><circle cx="7.600" cy="7.800" r="5.400" fill="none" stroke="#e6e6e6" stroke-width="1.600"/><path d="M11.600 11.800 16 16.200" stroke="#e6e6e6" stroke-width="1.800" stroke-linecap="round"/></svg>
<div class="t" style="left:558px;top:1049px;font-size:14px;color:#e4e4e4;letter-spacing:-.5px">Search</div>
<svg style="left:690px;top:1040px" width="46" height="31" viewBox="0 0 46 31"><defs><linearGradient id="sn" x1="0" y1="0" x2="1" y2="0"><stop offset="0" stop-color="#4a6fd6"/><stop offset=".3" stop-color="#eef2fa"/><stop offset=".7" stop-color="#eef2fa"/><stop offset="1" stop-color="#4a6fd6"/></linearGradient></defs><circle cx="21.700" cy="12.800" r="11.300" fill="#f5c350"/><circle cx="17" cy="8.500" r="2" fill="#e8ab3a"/><circle cx="26" cy="15" r="1.500" fill="#e8ab3a"/><circle cx="19.500" cy="18" r="1.400" fill="#e48946"/><circle cx="14.500" cy="14" r="1" fill="#e8ab3a"/>
<path d="M1.600 27 3.400 20.500 5 24 6.800 17.500 8.600 23 10.200 19 11.800 24 13.600 21.500 15 27ZM28 27 29.600 22 31.200 24.500 33 18 34.800 23.500 36.600 16.500 38.600 23 40.200 20 42 24.500 43.600 27Z" fill="#3c62d0"/><path d="M1.600 27C9 24.600 18 24.400 24 25.200 31 25.800 38 26 43.600 27 38 29.600 8 29.600 1.600 27Z" fill="url(#sn)"/></svg>
<!-- task view -->
<div class="abs" style="left:753px;top:1051px;width:18px;height:15.500px;border-radius:2px;background:#6e6e6e"></div>
<div class="abs" style="left:759px;top:1045px;width:18px;height:16px;border-radius:2px;background:linear-gradient(135deg,#fff,#d4d4d4)"></div>
<!-- chat -->
<svg style="left:796.500px;top:1044.800px" width="24" height="23" viewBox="0 0 25 24"><defs><linearGradient id="ch" x1="0" y1="0" x2="1" y2="1"><stop offset="0" stop-color="#8b8ee8"/><stop offset="1" stop-color="#5558b8"/></linearGradient></defs><path d="M12.800 .6A11.200 10.800 0 1 1 7 20.800L1 22.800 2.800 17.200A11.200 10.800 0 0 1 12.800 .6Z" fill="url(#ch)"/><rect x="5.600" y="6.800" width="10.400" height="9.200" rx="1.800" fill="#fff"/><path d="M16.600 10 20.400 7.600V15.200L16.600 12.800Z" fill="#fff"/></svg>
<!-- explorer -->
<svg style="left:840.500px;top:1044.500px" width="25" height="22" viewBox="0 0 25 22"><path d="M1.400 0H8.400L10.600 2.400H23.400A1.400 1.400 0 0 1 24.800 3.800V6H0V1.400A1.400 1.400 0 0 1 1.400 0Z" fill="#e8a81e"/><path d="M0 4.600H24.800V20.600A1.400 1.400 0 0 1 23.400 22H1.400A1.400 1.400 0 0 1 0 20.600Z" fill="#fbd24a"/><path d="M5 22V16.600A1.600 1.600 0 0 1 6.600 15H18.200A1.600 1.600 0 0 1 19.800 16.600V22Z" fill="#1e80d6"/><rect x="7.600" y="17.600" width="9.600" height="1.800" rx=".6" fill="#3fa0ee"/></svg>
<div class="abs" style="left:850.0px;top:1072px;width:6px;height:3px;border-radius:1.500px;background:#8a8a8a"></div>
<!-- edge -->
<svg style="left:884.500px;top:1044px" width="24.500" height="24" viewBox="0 0 24 24"><defs><linearGradient id="e1" x1="0" y1="0" x2="1" y2="0"><stop offset="0" stop-color="#2fa5e6"/><stop offset=".6" stop-color="#35c1b1"/><stop offset="1" stop-color="#6bd64e"/></linearGradient></defs><circle cx="12" cy="12" r="12" fill="#1565a8"/><path d="M.4 10.400A12 12 0 0 1 23.800 9.600C24.400 13 22.400 15.400 19.200 15.400H13.600C15.400 14.400 16 12.600 15.400 11 14.400 8.600 11.600 7.800 9 8.400 5 9.400 2 12.600 .4 10.400Z" fill="url(#e1)"/><path d="M9 8.400C5 9.400 3.600 13 4.400 16.400 5.400 20.800 9.400 23.600 14 23.800A12 12 0 0 1 .4 10.400C2 12.600 5 9.400 9 8.400Z" fill="#1b84d4"/><path d="M9.400 12.600C8.800 16.400 11.600 19.800 15.800 19.800 18 19.800 20 19 21.600 17.600 19.600 21.600 16 23.800 12.400 23.800 7.400 23.400 4.400 19 4.800 15 5 13.400 5.800 11.800 7.400 10.800 8.400 10.200 9.600 10.600 9.400 12.600Z" fill="#0f4f94"/></svg>
<!-- firefox -->
<svg style="left:928.500px;top:1043.500px" width="24.500" height="24.500" viewBox="0 0 24 24"><defs><radialGradient id="ff" cx=".7" cy=".15" r="1"><stop offset="0" stop-color="#fff36b"/><stop offset=".35" stop-color="#ff9a1f"/><stop offset=".7" stop-color="#ff3b47"/><stop offset="1" stop-color="#d61f7a"/></radialGradient></defs><path d="M12 3.400C13.400 2.400 14.600 1 15 0 17 1.600 18.400 3.600 19 5.600 20.400 4.800 21 3.600 21 3.600 23 6.200 24 9.200 24 12.400A12 11.600 0 0 1 0 12.400C0 9.600 1 7 2.400 5.200 2.400 6.200 2.800 7.200 3.400 7.800 4 5.600 5.400 3.800 7 2.800 7 4 7.600 5 8.400 5.600 9.400 4.600 10.800 3.800 12 3.400Z" fill="url(#ff)"/><circle cx="12" cy="13.400" r="5.800" fill="#7a3fd0"/><path d="M6.400 10.600C8 9.400 10 9.600 11 10.800 12.400 10.800 13.400 11.800 13.200 13 12.800 14.600 10.800 15 9.400 14.400 10 16.800 13 17.800 15.400 16.400 18 15 18.400 11.600 17 9.400 19 11 19.600 14 18.400 16.600 16.800 19.800 13 21 9.800 19.800 6.400 18.400 4.800 14.200 6.400 10.600Z" fill="#ff8a1c"/></svg>
<!-- chrome active -->
<div class="abs" style="left:965px;top:1036px;width:40px;height:40px;border-radius:5px;background:#2d2d2d;border:1px solid #3a3a3a"></div>
<svg style="left:972.4px;top:1043.8px" width="24.4" height="24.4" viewBox="-12 -12 24 24">
<circle r="12" fill="#fff"/>
<path d="M0 0 L-10.390 -6 A12 12 0 0 1 10.390 -6Z" fill="#e53b2e"/>
<path d="M0 0 L10.390 -6 A12 12 0 0 1 0 12Z" fill="#fbc116"/>
<path d="M0 0 L0 12 A12 12 0 0 1 -10.390 -6Z" fill="#2da44e"/>
<path d="M-10.390 -6 A12 12 0 0 1 10.390 -6 L0 -6Z" fill="#e53b2e"/>
<path d="M10.390 -6 A12 12 0 0 1 0 12 L5.200 3Z" fill="#fbc116"/>
<path d="M0 12 A12 12 0 0 1 -10.390 -6 L-5.200 3Z" fill="#2da44e"/>
<circle r="5.600" fill="#fff"/><circle r="4.400" fill="#3c7ff0"/></svg>
<div class="abs" style="left:986px;top:1038.500px;width:16px;height:16px;border-radius:8px;background:#e8e8e8;overflow:hidden"><div class="abs" style="left:4.500px;top:1.500px;width:7px;height:8.500px;border-radius:3.500px;background:#2a201c"></div><div class="abs" style="left:5.500px;top:4px;width:5px;height:5.500px;border-radius:2.500px;background:#b98a6c"></div><div class="abs" style="left:2.500px;top:10.500px;width:11px;height:8px;border-radius:4px;background:#dfe6ee"></div></div>
<div class="abs" style="left:977.0px;top:1072px;width:16px;height:3px;border-radius:1.500px;background:#4cc2ff"></div>
<svg style="left:1016.8px;top:1043.8px" width="24.4" height="24.4" viewBox="-12 -12 24 24">
<circle r="12" fill="#fff"/>
<path d="M0 0 L-10.390 -6 A12 12 0 0 1 10.390 -6Z" fill="#e53b2e"/>
<path d="M0 0 L10.390 -6 A12 12 0 0 1 0 12Z" fill="#fbc116"/>
<path d="M0 0 L0 12 A12 12 0 0 1 -10.390 -6Z" fill="#2da44e"/>
<path d="M-10.390 -6 A12 12 0 0 1 10.390 -6 L0 -6Z" fill="#e53b2e"/>
<path d="M10.390 -6 A12 12 0 0 1 0 12 L5.200 3Z" fill="#fbc116"/>
<path d="M0 12 A12 12 0 0 1 -10.390 -6 L-5.200 3Z" fill="#2da44e"/>
<circle r="5.600" fill="#fff"/><circle r="4.400" fill="#3c7ff0"/></svg>
<div class="abs" style="left:1030px;top:1040px;width:14px;height:14px;border-radius:7px;background:#26282b"></div><div class="abs" style="left:1033px;top:1042.500px;width:8px;height:9px;border-radius:2px;background:#4a4d52"></div>
<svg style="left:1060.8px;top:1043.8px" width="24.4" height="24.4" viewBox="-12 -12 24 24">
<circle r="12" fill="#fff"/>
<path d="M0 0 L-10.390 -6 A12 12 0 0 1 10.390 -6Z" fill="#e53b2e"/>
<path d="M0 0 L10.390 -6 A12 12 0 0 1 0 12Z" fill="#fbc116"/>
<path d="M0 0 L0 12 A12 12 0 0 1 -10.390 -6Z" fill="#2da44e"/>
<path d="M-10.390 -6 A12 12 0 0 1 10.390 -6 L0 -6Z" fill="#e53b2e"/>
<path d="M10.390 -6 A12 12 0 0 1 0 12 L5.200 3Z" fill="#fbc116"/>
<path d="M0 12 A12 12 0 0 1 -10.390 -6 L-5.200 3Z" fill="#2da44e"/>
<circle r="5.600" fill="#fff"/><circle r="4.400" fill="#3c7ff0"/></svg>
<div class="abs" style="left:1074px;top:1039px;width:16px;height:16px;border-radius:8px;background:#d81b60"></div>
<div class="t" style="left:1078.600px;top:1042.500px;font-size:9.500px;color:#fff">S</div>
<div class="abs" style="left:1070.0px;top:1072px;width:6px;height:3px;border-radius:1.500px;background:#8a8a8a"></div>
<!-- monitor app -->
<svg style="left:1105px;top:1047px" width="24.500" height="18" viewBox="0 0 24.500 18"><rect width="24.500" height="18" rx="1" fill="#d5e8f6"/><path d="M0 15 2 13 4 14 6 6 8 12 10 10 12 13 14 11 16 4 18 10 20 9 22 12 24.500 11V18H0Z" fill="#7fbde8"/><path d="M0 15 2 13 4 14 6 6 8 12 10 10 12 13 14 11 16 4 18 10 20 9 22 12 24.500 11" fill="none" stroke="#3d95d6" stroke-width="1"/><rect y="16.600" width="24.500" height="1.400" fill="#a9bfd0"/></svg>
<!-- terminal -->
<div class="abs" style="left:1149px;top:1046.500px;width:22.500px;height:18.500px;background:#000;border:1px solid #8a8a8a;border-top:3px solid #9a9a9a"></div>
<div class="t" style="left:1151.500px;top:1051px;font-size:6.500px;color:#fff;font-family:'Liberation Mono',monospace;font-weight:bold;letter-spacing:-.4px">C:\__</div>
<!-- pgadmin elephant -->
<svg style="left:1193px;top:1043.500px" width="24" height="24" viewBox="0 0 24 24"><g fill="#5585c2" stroke="#f4f6fa" stroke-width="1.100" stroke-linejoin="round"><path d="M4.600 1.400C1.600 2 .4 5.600 1.200 9.400 1.800 12.600 3.800 15 6 14.600L8 12V2.400C7 1.400 5.800 1.200 4.600 1.400Z"/><path d="M19.400 1.400C22.400 2 23.600 5.600 22.800 9.400 22.200 12.600 20.600 14.400 18.600 14.600 20 15 21.400 15 22.200 15.400 21.400 16.800 18.800 17 17 16L16 12V2.400C17 1.400 18.200 1.200 19.400 1.400Z"/><path d="M8 2.400C9.600 .4 14.400 .4 16 2.400 17.400 5 17.400 10 16.600 13.600 16 17 16.800 20.400 14.800 22.600 13 24 10.400 23.200 10.200 20.800 10 18.400 10.200 16.400 9.400 14.400 7.600 12 6.800 5.600 8 2.400Z"/></g><circle cx="14.200" cy="7" r=".8" fill="#fff"/></svg>
<!-- vscode -->
<svg style="left:1236px;top:1043.500px" width="25" height="24" viewBox="0 0 25 24"><path d="M18.400 .2 24.600 3V21L18.400 23.800 6.600 13.400 2.600 16.600 .4 15.400V8.600L2.600 7.400 6.600 10.600ZM18.400 6.600 11.200 12 18.400 17.400Z" fill="#2196e6"/><path d="M18.400 .2 24.600 3V21L18.400 23.800Z" fill="#1b7fd0"/><path d="M.4 8.600 2.600 7.400 18.400 21.400V23.800Z" fill="#3aa8f2" opacity=".9"/></svg>
<div class="abs" style="left:1246.0px;top:1072px;width:6px;height:3px;border-radius:1.500px;background:#8a8a8a"></div>
<!-- pycharm -->
<svg style="left:1280px;top:1043.500px" width="25" height="25" viewBox="0 0 25 25"><defs><linearGradient id="pc1" x1="0" y1="0" x2="1" y2="1"><stop offset="0" stop-color="#21d789"/><stop offset=".5" stop-color="#17c1c7"/><stop offset="1" stop-color="#fcf84a"/></linearGradient></defs><path d="M1 2 16 0 24 6 25 18 17 25 3 23 0 12Z" fill="url(#pc1)"/><path d="M14 3 24 6 25 18 18 14Z" fill="#f3e63c"/><path d="M0 12 3 23 12 24 8 16Z" fill="#1fd27c"/><rect x="4.600" y="4.600" width="15.800" height="15.800" fill="#000"/><rect x="6.400" y="17" width="6" height="1.200" fill="#fff"/></svg>
<div class="t" style="left:1286px;top:1050px;font-size:8.500px;font-weight:bold;color:#fff;letter-spacing:-.5px">PC</div>
<!-- git tool -->
<svg style="left:1324px;top:1043.500px" width="26" height="25" viewBox="0 0 26 25"><g transform="translate(13 12.500) rotate(45)"><rect x="-8.600" y="-8.600" width="8.200" height="8.200" rx="1" fill="#e8706a"/><rect x=".4" y="-8.600" width="8.200" height="8.200" rx="1" fill="#6fba5a"/><rect x="-8.600" y=".4" width="8.200" height="8.200" rx="1" fill="#6aa0ea"/><rect x=".4" y=".4" width="8.200" height="8.200" rx="1" fill="#f0dc78"/></g><path d="M12 5.600V18.400M12 12 17 8.200" fill="none" stroke="#111" stroke-width="1.500"/><circle cx="12" cy="5.600" r="1.700" fill="#111"/><circle cx="12" cy="18.600" r="1.700" fill="#111"/><circle cx="17.200" cy="8" r="1.700" fill="#111"/></svg>
<!-- taskpro -->
<div class="abs" style="left:1369px;top:1043.500px;width:24px;height:24.500px;background:#fff"></div>
<svg style="left:1374px;top:1047px" width="14" height="11" viewBox="0 0 14 11"><rect x=".6" y=".6" width="12.800" height="7.600" rx=".8" fill="#dff0f6" stroke="#2f8fb0" stroke-width="1"/><path d="M5 10.400H9M7 8.400V10.400" stroke="#2f8fb0" stroke-width="1"/></svg>
<div class="t" style="left:1376.200px;top:1048.800px;font-size:5px;font-weight:bold;color:#2a9d5c">OK</div>
<div class="t" style="left:1372.500px;top:1060px;font-size:4.500px;color:#555">TaskPro</div>
<div class="abs" style="left:1378.0px;top:1072px;width:6px;height:3px;border-radius:1.500px;background:#8a8a8a"></div>
<!-- blue doc -->
<svg style="left:1415px;top:1043.500px" width="21" height="24.500" viewBox="0 0 21 24.500"><path d="M2 0H14L21 7V22.500A2 2 0 0 1 19 24.500H2A2 2 0 0 1 0 22.500V2A2 2 0 0 1 2 0Z" fill="#1d6fc4"/><path d="M14 0 21 7H16A2 2 0 0 1 14 5Z" fill="#4ea3ec"/><path d="M3.600 10.400H9.600M3.600 13.600H17M3.600 16.800H17M3.600 20H12" stroke="#e8f2fc" stroke-width="1.400"/><rect x="11.600" y="8.600" width="5.600" height="3" fill="#cfe4f8"/></svg>
<div class="abs" style="left:1422.0px;top:1072px;width:6px;height:3px;border-radius:1.500px;background:#8a8a8a"></div>
<!-- tray -->
<svg style="left:1671px;top:1052px" width="12" height="8" viewBox="0 0 12 8"><path d="M1 6.800 6 1.600 11 6.800" fill="none" stroke="#fff" stroke-width="1.500"/></svg>
<svg style="left:1701px;top:1050px" width="17" height="11" viewBox="0 0 17 11"><path d="M4 11A3.600 3.600 0 0 1 3.200 4 5 5 0 0 1 12.400 3.200 4 4 0 0 1 13 11Z" fill="#c9c9c9"/><path d="M6 11 11.600 3.600A4 4 0 0 1 13 11Z" fill="#f2f2f2"/></svg>
<svg style="left:1733px;top:1050px" width="17" height="12" viewBox="0 0 17 12"><rect x=".7" y=".7" width="15.600" height="10.600" rx="1.600" fill="none" stroke="#fff" stroke-width="1.200"/><path d="M3.200 4H4.400M6 4H7.200M8.800 4H10M11.600 4H12.800M3.200 6.200H4.400M6 6.200H7.200M8.800 6.200H10M11.600 6.200H12.800M5 8.600H12" stroke="#fff" stroke-width="1.100"/></svg>
<svg style="left:1765px;top:1049.500px" width="16" height="12" viewBox="0 0 16 12"><path d="M.8 4.400A10.400 10.400 0 0 1 15.200 4.400M3 6.800A7.200 7.200 0 0 1 13 6.800M5.200 9A4 4 0 0 1 10.800 9" fill="none" stroke="#fff" stroke-width="1.300" stroke-linecap="round"/><circle cx="8" cy="10.800" r="1.100" fill="#fff"/></svg>
<svg style="left:1788.500px;top:1049px" width="17" height="14" viewBox="0 0 17 14"><path d="M.8 4.800H3.400L7 1.600V12.400L3.400 9.200H.8Z" fill="none" stroke="#fff" stroke-width="1.100" stroke-linejoin="round"/><path d="M9.200 4.600A3.400 3.400 0 0 1 9.200 9.400M11.400 2.800A6 6 0 0 1 11.400 11.200M13.600 1A8.600 8.600 0 0 1 13.600 13" fill="none" stroke="#fff" stroke-width="1.100" stroke-linecap="round"/></svg>
<div class="t tk" style="left:1776px;top:1042.500px;width:100.500px;text-align:right;letter-spacing:-.25px">6:36 PM</div>
<div class="t tk" style="left:1776px;top:1058.500px;width:100.500px;text-align:right;letter-spacing:.15px">12/4/2025</div>
<svg style="left:1885px;top:1048.500px" width="14" height="16" viewBox="0 0 14 16"><path d="M7 .4A4.800 4.800 0 0 1 11.800 5.200V9L13.600 12.200H.4L2.200 9V5.200A4.800 4.800 0 0 1 7 .4Z" fill="#7fd6f4"/><path d="M4.800 13.200H9.200A2.200 2.200 0 0 1 4.800 13.200Z" fill="#7fd6f4"/></svg>


</div>
</body>
</html>
